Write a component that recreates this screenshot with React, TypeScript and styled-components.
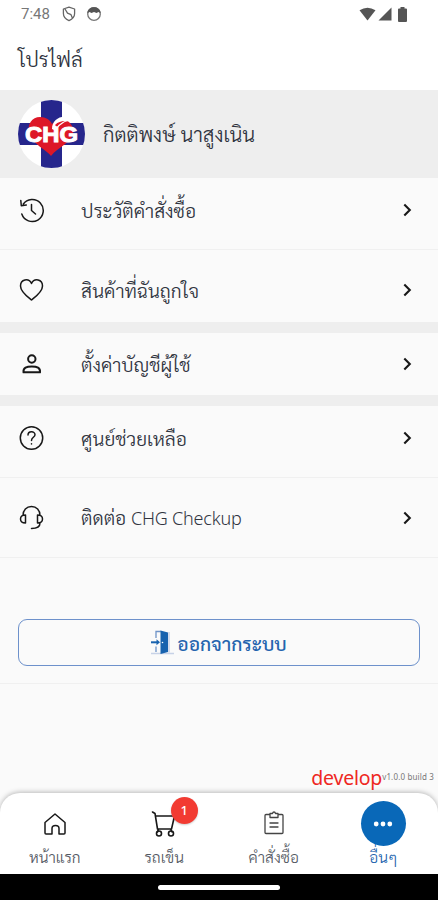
import React from 'react';
import styled, { createGlobalStyle } from 'styled-components';

const Global = createGlobalStyle`
  *, *::before, *::after { box-sizing: border-box; }
  body { margin: 0; background: #fafafa; }
  svg { display: block; flex: none; }
`;

const Screen = styled.div`
  width: 438px;
  height: 900px;
  display: flex;
  flex-direction: column;
  overflow: hidden;
  background: #fafafa;
  color: #2b2f38;
  font-family: Sarabun, "Noto Sans Thai Looped", "Noto Sans Thai", "Open Sans", "Noto Sans", sans-serif;
`;

const StatusBar = styled.div`
  height: 28px;
  flex: none;
  display: flex;
  align-items: center;
  justify-content: space-between;
  padding: 0 31px 0 21px;
  background: #fff;
`;
const StatusGroup = styled.div<{ $gap: number }>`
  display: flex;
  align-items: center;
  gap: ${p => p.$gap}px;
`;
const Clock = styled.span`
  font: 400 15px/28px Roboto, sans-serif;
  color: #777;
  width: 30px;
  margin-right: 1px;
`;

const Header = styled.header`
  height: 62px;
  flex: none;
  padding: 0 18px 1px;
  display: flex;
  align-items: center;
  background: #fff;
`;

const Label = styled.span<{ $size: number; $color?: string; $weight?: number }>`
  font-size: ${p => p.$size}px;
  color: ${p => p.$color ?? '#30343f'};
  font-weight: ${p => p.$weight ?? 300};
  line-height: 1.3;
  padding-top: 1px;
  white-space: nowrap;
`;
const Latin = styled.span`
  font-family: "Noto Sans", sans-serif;
  font-size: 18px;
  letter-spacing: -0.2px;
`;

const Profile = styled.section`
  height: 88px;
  flex: none;
  display: flex;
  align-items: center;
  gap: 18px;
  padding: 0 18px;
  background: #eee;
`;

const Row = styled.div<{ $height: number; $top?: number; $bottom?: number; $line?: boolean }>`
  height: ${p => p.$height}px;
  flex: none;
  display: grid;
  grid-template-columns: 62px 1fr 12px;
  align-items: center;
  padding: ${p => p.$top ?? 0}px 25px ${p => p.$bottom ?? 0}px 19px;
  border-bottom: ${p => (p.$line ? '1px solid #f0f0f0' : '0')};
`;
const Divider = styled.div`
  height: 11px;
  flex: none;
  background: #eee;
`;

const LogoutArea = styled.div`
  height: 126px;
  flex: none;
  padding: 61px 18px 0;
  border-bottom: 1px solid #f0f0f0;
`;
const LogoutButton = styled.button`
  width: 100%;
  height: 47px;
  display: flex;
  align-items: center;
  justify-content: center;
  gap: 3px;
  padding: 0;
  border: 1px solid #6d91cb;
  border-radius: 9px;
  background: #fafafa;
  font-family: inherit;
`;

const Version = styled.div`
  flex: 1;
  display: flex;
  align-items: flex-end;
  justify-content: flex-end;
  padding: 0 4px 3px 0;
  white-space: nowrap;
`;
const Branch = styled.span`
  font: 400 19.5px/24px "Noto Sans", sans-serif;
  letter-spacing: -0.2px;
  color: #ee2722;
`;
const Build = styled.span`
  font: 400 8px/26px "Noto Sans", sans-serif;
  letter-spacing: 0.15px;
  color: #777;
`;

const Nav = styled.nav`
  height: 81px;
  flex: none;
  display: grid;
  grid-template-columns: repeat(4, 1fr);
  border-radius: 20px 20px 0 0;
  background: #fff;
  box-shadow: 0 -1px 5px rgba(0, 0, 0, 0.26);
`;
const NavItem = styled.div`
  display: flex;
  flex-direction: column;
  align-items: center;
  padding-top: 8px;
`;
const NavIcon = styled.div<{ $active?: boolean }>`
  position: relative;
  width: 45px;
  height: 45px;
  display: grid;
  place-items: center;
  border-radius: 50%;
  background: ${p => (p.$active ? '#0968b8' : 'transparent')};
`;
const Badge = styled.span`
  position: absolute;
  left: 29px;
  top: -4px;
  width: 27px;
  height: 27px;
  border-radius: 50%;
  background: #f23b32;
  color: #fff;
  font: 500 13px/27px "Noto Sans", sans-serif;
  text-align: center;
  box-shadow: 0 1px 2px rgba(0, 0, 0, 0.2);
`;
const GestureBar = styled.div`
  height: 26px;
  flex: none;
  display: grid;
  place-items: center;
  background: #000;
`;
const GestureHandle = styled.div`
  width: 122px;
  height: 5px;
  border-radius: 3px;
  background: #fff;
`;

const line = {
  fill: 'none',
  stroke: '#181818',
  strokeWidth: 1.5,
  strokeLinecap: 'round' as const,
  strokeLinejoin: 'round' as const,
};

const ShieldIcon = () => (
  <svg width="14" height="16" viewBox="0 0 14 16" {...line} stroke="#666" strokeWidth="1.3">
    <path d="M7 1.2 12.6 3v4.5c0 3.2-2.2 5.6-5.6 7.1C3.6 13.1 1.4 10.7 1.4 7.5V3ZM3 3l2.500 4.200 3.500 1.500 1.500 3.500" />
  </svg>
);
const FaceIcon = () => (
  <svg width="16" height="16" viewBox="0 0 16 16">
    <circle cx="8" cy="8" r="6.3" fill="none" stroke="#777" strokeWidth="1.3" />
    <path d="M1.2 7.200C1.800 3 4.600 1.200 8 1.200S14.200 3 14.800 7.200L12.500 6 10.500 7 8 6 5.500 7 3.500 6Z" fill="#555" />
  </svg>
);
const WifiIcon = () => (
  <svg width="17" height="14" viewBox="0 0 17 14">
    <path d="M.5 3.200Q8.500-1.800 16.500 3.200L8.500 13.500Z" fill="#555" />
  </svg>
);
const SignalIcon = () => (
  <svg width="14" height="14" viewBox="0 0 14 14">
    <path d="M13.500.5v13H.5Z" fill="#555" />
  </svg>
);
const BatteryIcon = () => (
  <svg width="9" height="15" viewBox="0 0 9 15">
    <path d="M2.500 0h4v1.500H8A1 1 0 0 1 9 2.500V14a1 1 0 0 1-1 1H1a1 1 0 0 1-1-1V2.500a1 1 0 0 1 1-1h1.500Z" fill="#555" />
  </svg>
);

const Logo = () => (
  <svg width="67" height="68" viewBox="0 0 67 68">
    <defs>
      <clipPath id="disc"><ellipse cx="33.500" cy="34" rx="33.500" ry="34" /></clipPath>
    </defs>
    <g clipPath="url(#disc)">
      <rect width="67" height="68" fill="#fff" />
      <path d="M23 0h21v68H23ZM0 23h67v22H0Z" fill="#26268c" />
      <path d="M33 56C29 50 14 44 11 33c-2-9 3-16 11-16 6 0 10 3 12 7 4-4 9-6 14-4 6 3 8 9 7 14-2 9-15 13-22 22Z" fill="#dd1727" />
      <path d="M34 29c0-8 7-13 14-12 4 0 6 3 7 6-4-3-8-2-11 1-3 2-5 4-6 7Z" fill="#fff" />
      <path d="M37 25c3-3 6-4 10-4-4 2-6 3-8 6Z" fill="#dd1727" />
      <text x="33.500" y="42" textAnchor="middle" textLength="53" lengthAdjust="spacingAndGlyphs" fontFamily="Liberation Sans, sans-serif" fontWeight="700" fontSize="22.500" fill="#fff" stroke="#fff" strokeWidth="1">CHG</text>
    </g>
  </svg>
);

const HistoryIcon = () => (
  <svg width="26" height="26" viewBox="0 0 26 26" {...line}>
    <path d="M4.200 7.300A11 11 0 1 1 2.800 17M1.800 3.500l.5 5.200 5-.7M12.500 7.500v6l4 3.500" />
  </svg>
);
const HeartIcon = () => (
  <svg width="26" height="26" viewBox="0 0 26 26" {...line}>
    <path d="M12.500 23C9.500 20.500 1.500 15 1.500 9c0-6.500 8-8.500 11-2.500 3-6 11-4 11 2.500 0 6-8 11.500-11 14Z" />
  </svg>
);
const UserIcon = () => (
  <svg width="26" height="26" viewBox="0 0 26 26" {...line} strokeWidth="2">
    <circle cx="12.800" cy="8" r="3.700" />
    <path d="M4.500 21.300h16.500c.5-4.500-3-5.800-8.200-5.800S4 16.800 4.500 21.300Z" />
  </svg>
);
const HelpIcon = () => (
  <svg width="26" height="26" viewBox="0 0 26 26" {...line}>
    <circle cx="12.500" cy="13" r="11.200" />
    <path d="M9 10c0-4 7-4.300 7-.3 0 2.500-3.500 2.800-3.500 5.800M12.500 18.700v.2" />
  </svg>
);
const HeadsetIcon = () => (
  <svg width="26" height="26" viewBox="0 0 26 26" {...line}>
    <path d="M4 10.500C4 5 7.500 1.500 12.500 1.500S21 5 21 10.500M21 18c0 4-3 5.500-8.500 5.500M6.500 10C3 10 1.500 11.500 1.500 14s1.500 4 5 4ZM18.500 10c3.500 0 5 1.500 5 4s-1.500 4-5 4Z" />
  </svg>
);
const Chevron = () => (
  <svg width="12" height="16" viewBox="0 0 12 16" {...line} strokeWidth="2.100" strokeLinecap="butt" strokeLinejoin="miter">
    <path d="m3.300 2.500 5.500 5.500-5.500 5.500" />
  </svg>
);
const DoorIcon = () => (
  <svg width="23" height="25" viewBox="0 0 23 25">
    <path d="M0 23.500h23" stroke="#c7d2e7" strokeWidth="1.500" />
    <path d="M5 8V1.500h5M5 16.500V22" fill="none" stroke="#6f94c8" strokeWidth="1.300" />
    <path d="M18 2v20.500" stroke="#c7d2e7" strokeWidth="1.500" />
    <path d="M9.500.5 17 2.500V22l-7.500 2Z" fill="#1762ae" />
    <path d="M0 12.300h7" stroke="#1762ae" strokeWidth="2" />
    <path d="m5.500 9.300 3.500 3-3.500 3Z" fill="#1762ae" />
    <circle cx="11.500" cy="12.500" r=".8" fill="#fff" />
  </svg>
);
const HomeIcon = () => (
  <svg width="24" height="24" viewBox="0 0 24 24" {...line}>
    <path d="M2 10.500 12 2l10 8.500V21a1 1 0 0 1-1 1h-5v-5.500c0-4-7-4-7 0V22H3a1 1 0 0 1-1-1Z" />
  </svg>
);
const CartIcon = () => (
  <svg width="26" height="28" viewBox="0 0 26 28" {...line} strokeWidth="1.600">
    <path d="M1.500 2 4 3.500l2.500 15.500H20.500M4.500 6H23.500L20.500 19M7.500 19l-1 3M19.500 19l1.500 3" />
    <circle cx="8" cy="23.500" r="2.500" />
    <circle cx="20" cy="23.500" r="2.500" />
  </svg>
);
const ClipboardIcon = () => (
  <svg width="22" height="25" viewBox="0 0 22 25" {...line} stroke="#444" strokeWidth="1.300">
    <path d="M7 3.500H3a1 1 0 0 0-1 1v17a1 1 0 0 0 1 1h16a1 1 0 0 0 1-1v-17a1 1 0 0 0-1-1h-4M7 6.500h8v-4h-2.500c-.5-2-2.500-2-3 0H7ZM7 12h8M7 16h8" />
  </svg>
);
const DotsIcon = () => (
  <svg width="20" height="6" viewBox="0 0 20 6" fill="#fff">
    <circle cx="3.200" cy="3" r="2.400" />
    <circle cx="10" cy="3" r="2.400" />
    <circle cx="16.800" cy="3" r="2.400" />
  </svg>
);

export default function App() {
  return (
    <>
      <Global />
      <Screen>
        <StatusBar>
          <StatusGroup $gap={10}>
            <Clock>7:48</Clock>
            <ShieldIcon />
            <FaceIcon />
          </StatusGroup>
          <StatusGroup $gap={6}>
            <StatusGroup $gap={2}>
              <WifiIcon />
              <SignalIcon />
            </StatusGroup>
            <BatteryIcon />
          </StatusGroup>
        </StatusBar>
        <Header><Label $size={20.5}>โปรไฟล์</Label></Header>
        <Profile>
          <Logo />
          <Label $size={20.2}>กิตติพงษ์ นาสูงเนิน</Label>
        </Profile>
        <Row $height={72} $bottom={7} $line>
          <HistoryIcon /><Label $size={19.1}>ประวัติคำสั่งซื้อ</Label><Chevron />
        </Row>
        <Row $height={72} $top={8}>
          <HeartIcon /><Label $size={19.1}>สินค้าที่ฉันถูกใจ</Label><Chevron />
        </Row>
        <Divider />
        <Row $height={62} $bottom={1}>
          <UserIcon /><Label $size={19.1}>ตั้งค่าบัญชีผู้ใช้</Label><Chevron />
        </Row>
        <Divider />
        <Row $height={72} $bottom={8} $line>
          <HelpIcon /><Label $size={19.1}>ศูนย์ช่วยเหลือ</Label><Chevron />
        </Row>
        <Row $height={80} $line>
          <HeadsetIcon /><Label $size={19.1}>ติดต่อ <Latin>CHG Checkup</Latin></Label><Chevron />
        </Row>
        <LogoutArea>
          <LogoutButton>
            <DoorIcon />
            <Label $size={19.1} $color="#2464ae" $weight={500}>ออกจากระบบ</Label>
          </LogoutButton>
        </LogoutArea>
        <Version><Branch>develop</Branch><Build>v1.0.0 build 3</Build></Version>
        <Nav>
          <NavItem><NavIcon><HomeIcon /></NavIcon><Label $size={15.4} $color="#555a64">หน้าแรก</Label></NavItem>
          <NavItem><NavIcon><CartIcon /><Badge>1</Badge></NavIcon><Label $size={15.4} $color="#555a64">รถเข็น</Label></NavItem>
          <NavItem><NavIcon><ClipboardIcon /></NavIcon><Label $size={15.4} $color="#555a64">คำสั่งซื้อ</Label></NavItem>
          <NavItem><NavIcon $active><DotsIcon /></NavIcon><Label $size={15.4} $color="#2464ae">อื่นๆ</Label></NavItem>
        </Nav>
        <GestureBar><GestureHandle /></GestureBar>
      </Screen>
    </>
  );
}
